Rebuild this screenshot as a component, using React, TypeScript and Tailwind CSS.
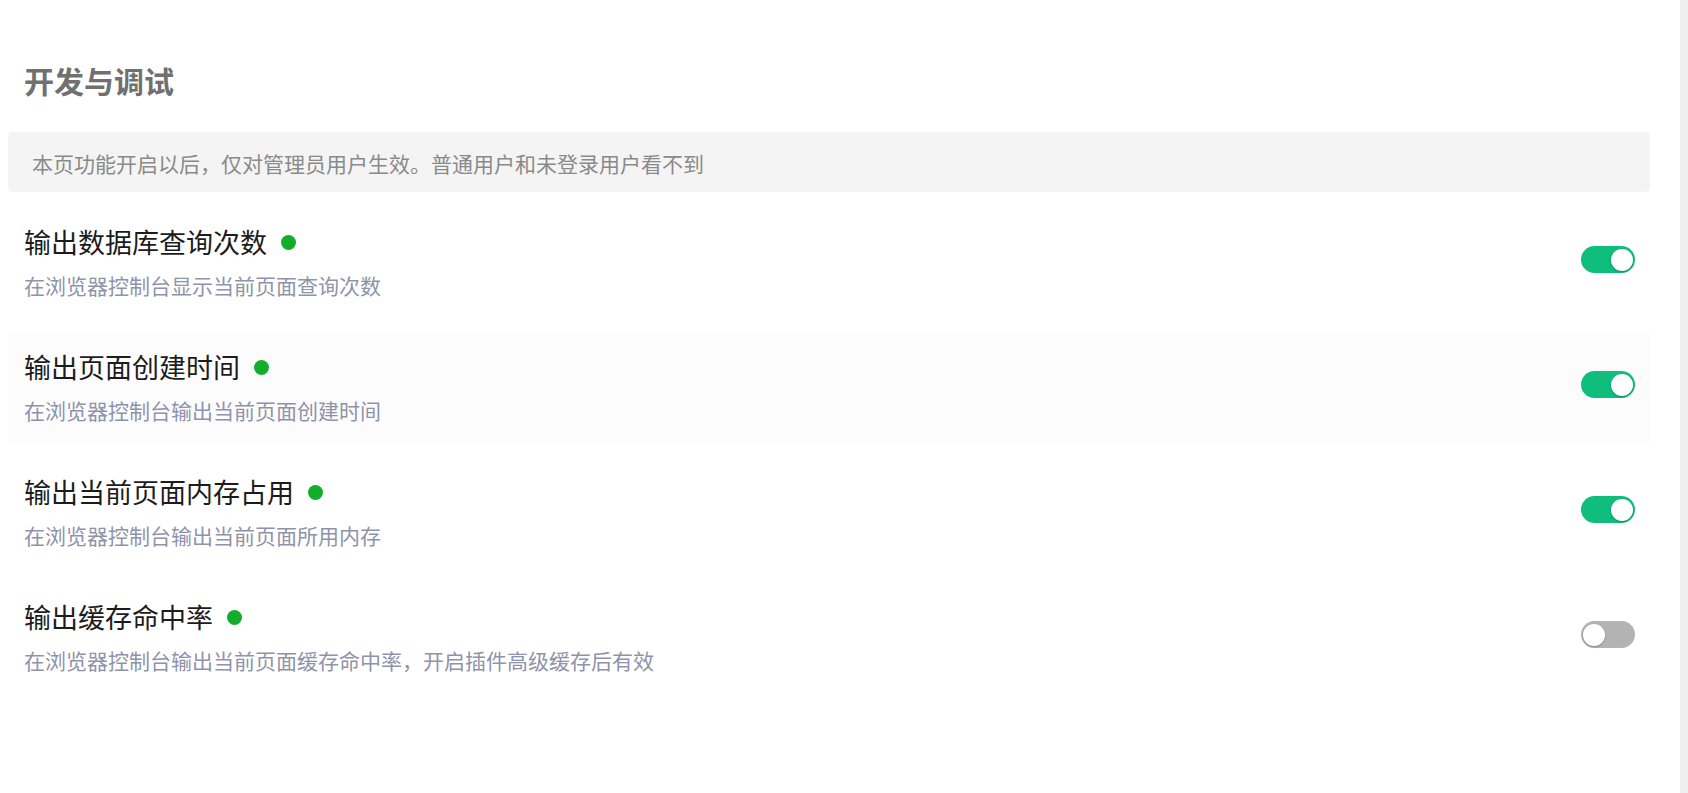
import { useState } from "react";

type Item = {
    title: string;
    desc: string;
    on: boolean;
};

const initialItems: Item[] = [
    { title: "输出数据库查询次数", desc: "在浏览器控制台显示当前页面查询次数", on: true },
    { title: "输出页面创建时间", desc: "在浏览器控制台输出当前页面创建时间", on: true },
    { title: "输出当前页面内存占用", desc: "在浏览器控制台输出当前页面所用内存", on: true },
    { title: "输出缓存命中率", desc: "在浏览器控制台输出当前页面缓存命中率，开启插件高级缓存后有效", on: false },
];

function Toggle({ on, onClick }: { on: boolean; onClick: () => void }) {
    return (
        <button
            onClick={onClick}
            className={`flex h-[27px] w-[54px] shrink-0 items-center rounded-full px-[2px] ${
                on ? "justify-end bg-[#0fbd7d]" : "justify-start bg-[#b3b3b3]"
            }`}
        >
            <span className="h-[22px] w-[22px] rounded-full bg-white shadow-[0_1px_2px_rgba(0,0,0,0.25)]" />
        </button>
    );
}

export default function App() {
    const [items, setItems] = useState(initialItems);

    const toggle = (i: number) => {
        setItems(items.map((it, idx) => (idx === i ? { ...it, on: !it.on } : it)));
    };

    return (
        <div className="flex min-h-screen w-full bg-white font-['Noto_Sans_CJK_SC',sans-serif]">
            <div className="flex-1 pl-[8px] pr-[30px] pt-[60px]">
                {/* Header */}
                <h1 className="pl-4 text-[30px] font-bold leading-[40px] text-[#707070]">开发与调试</h1>

                <div className="mt-[32px] flex h-[60px] items-center rounded-[5px] bg-[#f4f4f4] pl-[24px] pt-[3px] text-[21px] text-[#8a8a8a]">
                    本页功能开启以后，仅对管理员用户生效。普通用户和未登录用户看不到
                </div>

                {/* Settings */}
                <div className="mt-[15px] flex flex-col gap-[14px]">
                    {items.map((it, i) => (
                        <div
                            key={it.title}
                            className={`flex h-[111px] items-start justify-between pl-4 pr-[15px] ${
                                i === 1 ? "bg-[#fcfcfd]" : ""
                            }`}
                        >
                            <div className="pt-[16px]">
                                <div className="flex items-center">
                                    <span className="text-[27px] leading-[38px] text-[#1c1c1c]">{it.title}</span>
                                    <span className="ml-[14px] h-[15px] w-[15px] rounded-full bg-[#12ad2b]" />
                                </div>
                                <p className="mt-[9px] text-[21px] leading-[30px] text-[#8f93aa]">{it.desc}</p>
                            </div>
                            <div className="mt-[39px]">
                                <Toggle on={it.on} onClick={() => toggle(i)} />
                            </div>
                        </div>
                    ))}
                </div>
            </div>
            <div className="w-[8px] shrink-0 bg-[#efefef]" />
        </div>
    );
}
